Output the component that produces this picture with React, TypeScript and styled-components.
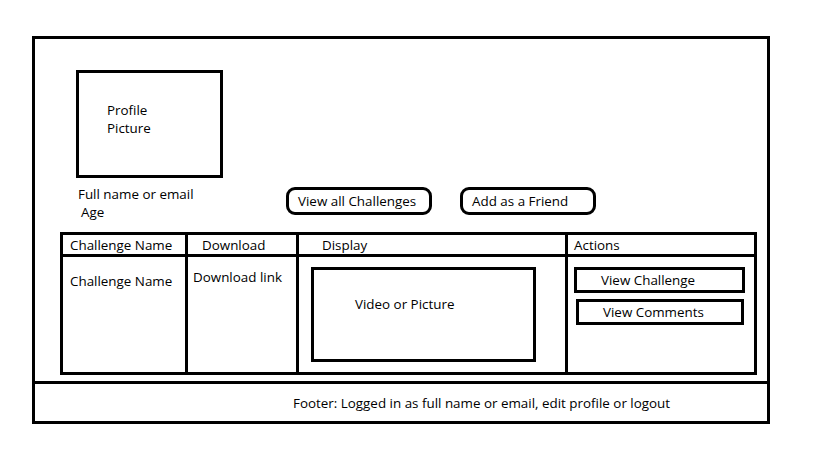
import React from "react";
import styled, { createGlobalStyle } from "styled-components";

const GlobalStyle = createGlobalStyle`
  html, body {
    margin: 0;
    padding: 0;
    background: #ffffff;
  }

  body {
    font-family: "Open Sans", "Noto Sans", Arial, sans-serif;
    font-size: 13.4px;
    color: #000000;
  }

  * {
    box-sizing: border-box;
  }
`;

const Page = styled.div`
  width: 819px;
  height: 460px;
  padding: 36px 0 0 32px;
`;

const Frame = styled.div`
  width: 738px;
  height: 388px;
  border: 3px solid #000;
  display: flex;
  flex-direction: column;
`;

const Main = styled.div`
  flex: 1;
  padding: 31px 9px 6px 25px;
  display: flex;
  flex-direction: column;
`;

const PictureBox = styled.div`
  width: 147px;
  height: 108px;
  margin-left: 16px;
  border: 3px solid #000;
  padding: 28px 0 0 28px;
  line-height: 18px;
`;

const ProfileRow = styled.div`
  display: flex;
  align-items: flex-start;
  margin-top: 3px;
`;

const Info = styled.div`
  width: 226px;
  padding: 4px 0 0 18px;
  line-height: 18px;
`;

const InfoLine = styled.div<{ $indent?: number }>`
  padding-left: ${(p) => p.$indent ?? 0}px;
`;

const Buttons = styled.div`
  display: flex;
  gap: 28px;
  margin-top: 6px;
`;

const PillButton = styled.div<{ $width: number }>`
  width: ${(p) => p.$width}px;
  height: 28px;
  border: 3px solid #000;
  border-radius: 9px;
  padding-left: 9px;
  display: flex;
  align-items: center;
`;

const Table = styled.div`
  margin-top: 11px;
  width: 697px;
  height: 143px;
  background: #000;
  padding: 3px;
  display: grid;
  grid-template-columns: 122px 108px 266px 186px;
  grid-template-rows: 19px 115px;
  gap: 3px;
`;

const Cell = styled.div<{ $indent: number; $top?: number }>`
  background: #fff;
  padding-left: ${(p) => p.$indent}px;
  padding-top: ${(p) => p.$top ?? 0}px;
  line-height: 18px;
`;

const HeadCell = styled(Cell)`
  display: flex;
  align-items: center;
`;

const MediaBox = styled.div`
  width: 225px;
  height: 95px;
  border: 3px solid #000;
  padding: 25px 0 0 41px;
  line-height: 18px;
`;

const ActionList = styled.div`
  display: flex;
  flex-direction: column;
  gap: 6px;
`;

const ActionButton = styled.div<{ $width: number; $shift: number }>`
  width: ${(p) => p.$width}px;
  height: 26px;
  margin-left: ${(p) => p.$shift}px;
  border: 3px solid #000;
  padding-left: 24px;
  display: flex;
  align-items: center;
`;

const Footer = styled.div`
  height: 40px;
  border-top: 3px solid #000;
  padding-left: 258px;
  display: flex;
  align-items: center;
`;

const App: React.FC = () => {
  return (
    <>
      <GlobalStyle />
      <Page>
        <Frame>
          <Main>
            <PictureBox>
              Profile
              <br />
              Picture
            </PictureBox>
            <ProfileRow>
              <Info>
                <InfoLine>Full name or email</InfoLine>
                <InfoLine $indent={3}>Age</InfoLine>
              </Info>
              <Buttons>
                <PillButton $width={146}>View all Challenges</PillButton>
                <PillButton $width={136}>Add as a Friend</PillButton>
              </Buttons>
            </ProfileRow>
            <Table>
              <HeadCell $indent={7}>Challenge Name</HeadCell>
              <HeadCell $indent={14}>Download</HeadCell>
              <HeadCell $indent={23}>Display</HeadCell>
              <HeadCell $indent={6}>Actions</HeadCell>
              <Cell $indent={7} $top={15}>
                Challenge Name
              </Cell>
              <Cell $indent={5} $top={11}>
                Download link
              </Cell>
              <Cell $indent={12} $top={10}>
                <MediaBox>Video or Picture</MediaBox>
              </Cell>
              <Cell $indent={6} $top={10}>
                <ActionList>
                  <ActionButton $width={171} $shift={0}>
                    View Challenge
                  </ActionButton>
                  <ActionButton $width={168} $shift={2}>
                    View Comments
                  </ActionButton>
                </ActionList>
              </Cell>
            </Table>
          </Main>
          <Footer>Footer: Logged in as full name or email, edit profile or logout</Footer>
        </Frame>
      </Page>
    </>
  );
};

export default App;
